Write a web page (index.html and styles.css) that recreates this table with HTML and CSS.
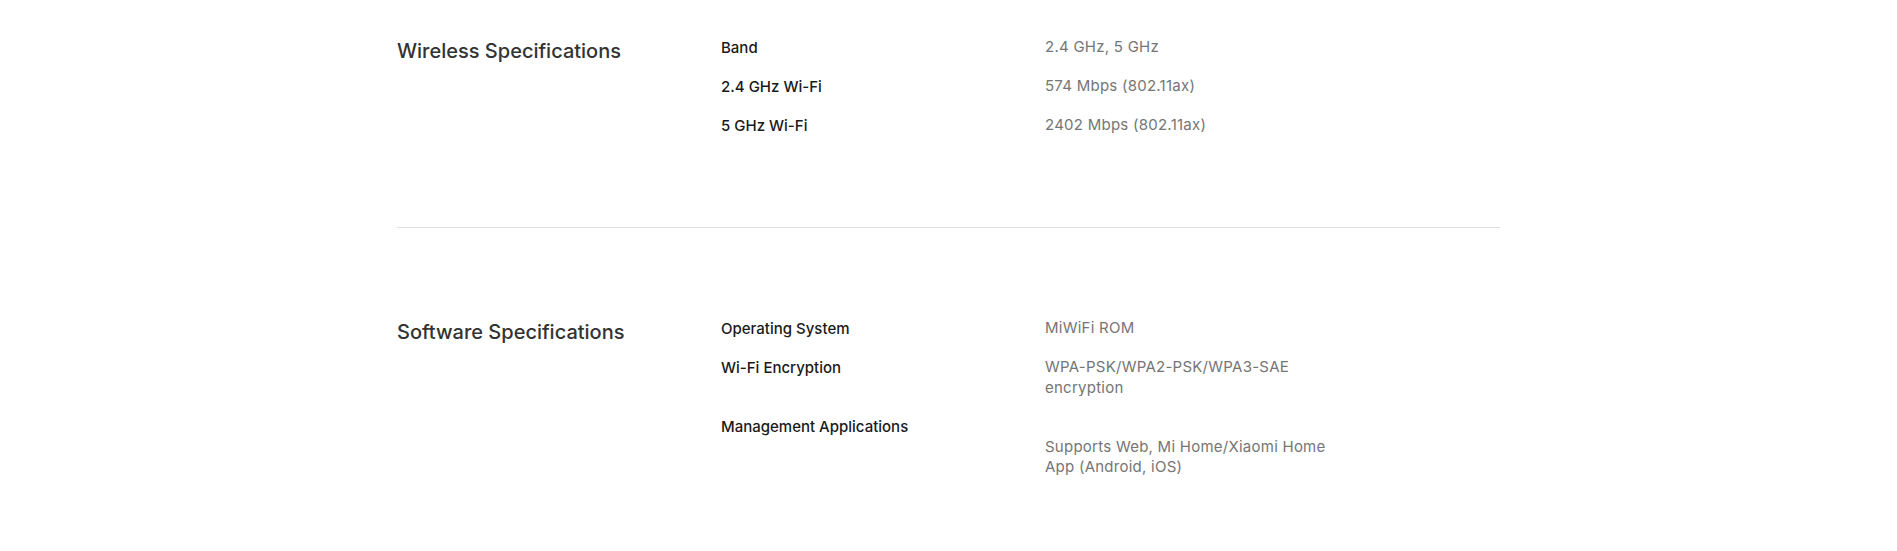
FILE: index.html
```html
<!DOCTYPE html>
<html lang="en">
<head>
<meta charset="utf-8">
<title>Specifications</title>
<link rel="stylesheet" href="styles.css">
</head>
<body>
<main class="specs">
  <section class="spec-section spec-section--first">
    <h2 class="spec-title">Wireless Specifications</h2>
    <dl class="spec-list">
      <div class="spec-row"><dt class="spec-label">Band</dt><dd class="spec-value">2.4 GHz, 5 GHz</dd></div>
      <div class="spec-row"><dt class="spec-label">2.4 GHz Wi-Fi</dt><dd class="spec-value">574 Mbps (802.11ax)</dd></div>
      <div class="spec-row"><dt class="spec-label">5 GHz Wi-Fi</dt><dd class="spec-value">2402 Mbps (802.11ax)</dd></div>
    </dl>
  </section>
  <section class="spec-section">
    <h2 class="spec-title">Software Specifications</h2>
    <dl class="spec-list">
      <div class="spec-row"><dt class="spec-label">Operating System</dt><dd class="spec-value">MiWiFi ROM</dd></div>
      <div class="spec-row"><dt class="spec-label">Wi-Fi Encryption</dt><dd class="spec-value">WPA-PSK/WPA2-PSK/WPA3-SAE encryption</dd></div>
      <div class="spec-row"><dt class="spec-label">Management Applications</dt><dd class="spec-value"><br>Supports Web, Mi Home/Xiaomi Home App (Android, iOS)</dd></div>
    </dl>
  </section>
</main>
</body>
</html>
```
FILE: styles.css
```css
* { box-sizing: border-box; }
html, body { margin: 0; padding: 0; background: #fff; }
body {
  font-family: "Inter", "Noto Sans", sans-serif;
  color: #333;
}
.specs {
  width: 1103px;
  margin: 0 auto;
}
.spec-section {
  display: grid;
  grid-template-columns: 324px 1fr;
  padding: 90px 0 91px;
}
.spec-section--first {
  padding-top: 37px;
  border-bottom: 1px solid #e0e0e0;
}
.spec-title {
  margin: 0;
  font-size: 20px;
  line-height: 28px;
  font-weight: 500;
  color: #333;
}
.spec-list {
  margin: 0;
  display: flex;
  flex-direction: column;
  gap: 18px;
}
.spec-row {
  display: grid;
  grid-template-columns: 324px 295px;
}
.spec-label {
  font-size: 15px;
  line-height: 21px;
  font-weight: 500;
  color: #1a1a1a;
}
.spec-value {
  margin: 0;
  font-size: 15px;
  line-height: 20.5px;
  letter-spacing: 0.25px;
  color: #757575;
}
```
